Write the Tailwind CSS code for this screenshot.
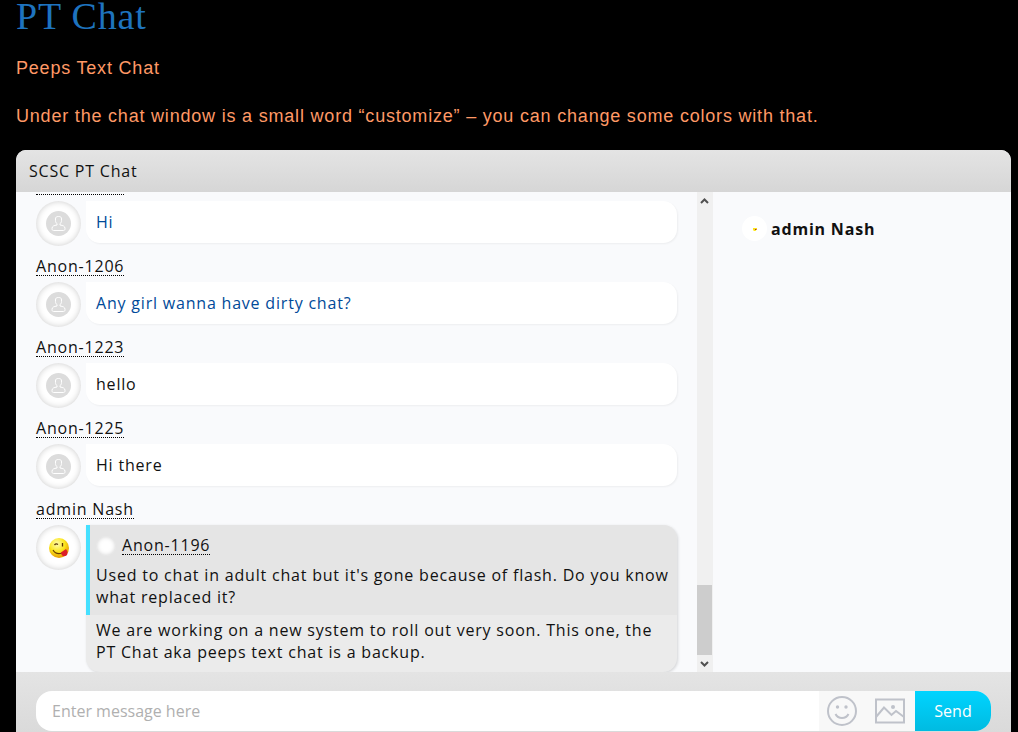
<!DOCTYPE html>
<html lang="en">
<head>
  <meta charset="UTF-8" />
  <meta name="viewport" content="width=device-width, initial-scale=1" />
  <title>PT Chat</title>
  <script src="https://cdn.jsdelivr.net/npm/@tailwindcss/browser@4"></script>
</head>
<body class="bg-black h-screen overflow-hidden flex flex-col pl-4 pr-[7px] tracking-wider font-['Liberation_Sans',sans-serif]">
  <!-- Shared icon -->
  <svg class="hidden">
    <symbol id="user" viewBox="0 0 45 45">
      <circle cx="22.500" cy="22.500" r="12.500" fill="#dcdcdc" />
      <path d="M19.500 18c0-2 1-2.500 3-2.500s3 .5 3 2.500v1.500c0 1.500-.5 2.500-1.500 3v1.500c3 .5 5 1 5 3.500 0 1.500-.5 2-1.500 2h-10c-1 0-1.500-.5-1.500-2 0-2.500 2-3 5-3.500v-1.500c-1-.5-1.500-1.500-1.500-3z" fill="none" stroke="#fff" />
    </symbol>
  </svg>

  <h1 class="text-[#1e73be] text-[38px] leading-8 font-['Liberation_Serif',serif]">PT Chat</h1>
  <p class="text-[#ff9966] text-lg leading-6 mt-6">Peeps Text Chat</p>
  <p class="text-[#ff9966] text-lg leading-6 mt-6">Under the chat window is a small word “customize” – you can change some colors with that.</p>

  <section class="mt-[22px] flex-1 min-h-0 flex flex-col rounded-t-[10px] overflow-hidden bg-[#f9fafc] text-[#111] text-base font-['Open_Sans',sans-serif]">
    <header class="h-[42px] shrink-0 px-[13px] flex items-center bg-linear-to-b from-[#e4e4e4] to-[#d6d6d6]">
      <h2>SCSC PT Chat</h2>
    </header>

    <div class="flex-1 min-h-0 flex">
      <!-- Messages -->
      <div class="flex-1 min-w-0 overflow-hidden flex flex-col justify-end gap-[11px] px-5">
        <article class="shrink-0">
          <a href="#" class="block w-fit leading-[18px] border-b border-dotted border-black mb-1.5">Anon-1206</a>
          <div class="flex gap-[5px] h-[45px] items-start">
            <svg class="size-[45px] shrink-0 rounded-full bg-white shadow-[inset_0_0_6px_#ccc]"><use href="#user" /></svg>
            <p class="flex-1 h-[42px] px-2.5 py-2.5 leading-[22px] bg-white text-[#004a99] rounded-[14px] rounded-tl-none shadow-[1px_1px_2px_#0000000d]">Hi</p>
          </div>
        </article>
        <article class="shrink-0">
          <a href="#" class="block w-fit leading-[18px] border-b border-dotted border-black mb-1.5">Anon-1206</a>
          <div class="flex gap-[5px] h-[45px] items-start">
            <svg class="size-[45px] shrink-0 rounded-full bg-white shadow-[inset_0_0_6px_#ccc]"><use href="#user" /></svg>
            <p class="flex-1 h-[42px] px-2.5 py-2.5 leading-[22px] bg-white text-[#004a99] rounded-[14px] rounded-tl-none shadow-[1px_1px_2px_#0000000d]">Any girl wanna have dirty chat?</p>
          </div>
        </article>
        <article class="shrink-0">
          <a href="#" class="block w-fit leading-[18px] border-b border-dotted border-black mb-1.5">Anon-1223</a>
          <div class="flex gap-[5px] h-[45px] items-start">
            <svg class="size-[45px] shrink-0 rounded-full bg-white shadow-[inset_0_0_6px_#ccc]"><use href="#user" /></svg>
            <p class="flex-1 h-[42px] px-2.5 py-2.5 leading-[22px] bg-white rounded-[14px] rounded-tl-none shadow-[1px_1px_2px_#0000000d]">hello</p>
          </div>
        </article>
        <article class="shrink-0">
          <a href="#" class="block w-fit leading-[18px] border-b border-dotted border-black mb-1.5">Anon-1225</a>
          <div class="flex gap-[5px] h-[45px] items-start">
            <svg class="size-[45px] shrink-0 rounded-full bg-white shadow-[inset_0_0_6px_#ccc]"><use href="#user" /></svg>
            <p class="flex-1 h-[42px] px-2.5 py-2.5 leading-[22px] bg-white rounded-[14px] rounded-tl-none shadow-[1px_1px_2px_#0000000d]">Hi there</p>
          </div>
        </article>
        <article class="shrink-0">
          <a href="#" class="block w-fit leading-[18px] border-b border-dotted border-black mb-1.5">admin Nash</a>
          <div class="flex gap-[5px] items-start">
            <svg viewBox="0 0 45 45" class="size-[45px] shrink-0 rounded-full bg-white shadow-[inset_0_0_6px_#ccc]">
              <defs>
                <radialGradient id="face" cx=".4" cy=".3" r=".7">
                  <stop offset="0" stop-color="#fffcb0" />
                  <stop offset=".55" stop-color="#fbe51c" />
                  <stop offset="1" stop-color="#e59a00" />
                </radialGradient>
              </defs>
              <circle cx="23" cy="23" r="10" fill="url(#face)" />
              <path d="M18.500 20q1.500-2 3.500-.5M26.500 18v3.500" fill="none" stroke="#5a3300" stroke-width="1.300" />
              <path d="M17 25q3 5 9 3" fill="none" stroke="#6b3d00" stroke-width="1.200" />
              <path d="M25 27.500l5-3.500c2 2 2 5 .5 6.500-2 1.500-5 1-5.500-3z" fill="#dc1f26" />
            </svg>
            <div class="flex-1 min-w-0 bg-[#ebebeb] rounded-[14px] rounded-tl-none shadow-[1px_1px_3px_#00000026]">
              <blockquote class="border-l-4 border-[#45e0ff] bg-[#e5e5e5] rounded-tr-[14px] pl-1.5 pr-1 pt-[11px] pb-[7px]">
                <div class="flex gap-1.5 mb-2">
                  <span class="size-5 rounded-full bg-white shadow-[inset_0_0_5px_#ccc]"></span>
                  <a href="#" class="h-[19px] leading-[18px] border-b border-dotted border-black">Anon-1196</a>
                </div>
                <p class="leading-[22px]">Used to chat in adult chat but it's gone because of flash. Do you know what replaced it?</p>
              </blockquote>
              <p class="leading-[22px] px-2.5 pt-1 pb-[9px]">We are working on a new system to roll out very soon. This one, the PT Chat aka peeps text chat is a backup.</p>
            </div>
          </div>
        </article>
      </div>

      <!-- Scrollbar -->
      <div class="w-4 shrink-0 flex flex-col bg-[#f0f0f0]">
        <svg class="w-[15px] h-[17px]" viewBox="0 0 15 17"><path d="M4 11l3.500-3.500L11 11" fill="none" stroke="#505050" stroke-width="2" /></svg>
        <div class="flex-1"></div>
        <div class="w-[15px] h-[70px] bg-[#cdcdcd]"></div>
        <svg class="w-[15px] h-[17px]" viewBox="0 0 15 17"><path d="M4 7l3.500 3.500L11 7" fill="none" stroke="#505050" stroke-width="2" /></svg>
      </div>

      <!-- Users -->
      <aside class="w-[298px] shrink-0 pl-[29px] pt-6">
        <div class="flex items-center gap-1 font-bold">
          <svg class="size-[25px]" viewBox="0 0 25 25">
            <circle cx="12.500" cy="12.500" r="12.500" fill="#fff" />
            <path d="M11 12h4v1l-1.500 2H12l-1-1z" fill="#fbe51c" />
            <path d="M13 13h1.500v1H13z" fill="#b4332a" />
          </svg>
          <span>admin Nash</span>
        </div>
      </aside>
    </div>

    <form class="shrink-0 px-5 pt-[19px] pb-px bg-linear-to-b from-[#e4e4e4] to-[#dadada]">
      <div class="h-10 flex rounded-2xl overflow-hidden bg-white">
        <input type="text" aria-label="Message" placeholder="Enter message here" class="flex-1 min-w-0 px-4 tracking-normal outline-none placeholder:text-[#b0b0b0]" />
        <div class="w-24 shrink-0 flex items-center justify-between px-2 bg-[#f8f8f8] text-[#bfc2ca]">
          <button type="button" aria-label="Smileys">
            <svg class="size-[30px]" viewBox="0 0 30 30" fill="none" stroke="currentColor" stroke-width="2">
              <circle cx="15" cy="15" r="14" />
              <path d="M8.500 18q2 4 6.500 4t6.500-4" />
              <circle cx="10.500" cy="11" r="1.700" fill="currentColor" stroke="none" />
              <circle cx="19" cy="11" r="1.700" fill="currentColor" stroke="none" />
            </svg>
          </button>
          <button type="button" aria-label="Send image" class="mr-0.5">
            <svg class="size-[30px]" viewBox="0 0 30 30" fill="none" stroke="currentColor" stroke-width="2">
              <path d="M1 3.500h28v23H1z" />
              <path d="M1 21l8-9.500 7.500 7.500 4.500-4 8 6" />
              <circle cx="18" cy="11" r="2" fill="currentColor" stroke="none" />
            </svg>
          </button>
        </div>
        <button type="submit" class="w-[76px] shrink-0 tracking-normal text-white bg-linear-to-b from-[#00d4ff] to-[#00bbe1]">Send</button>
      </div>
    </form>
  </section>
</body>
</html>
